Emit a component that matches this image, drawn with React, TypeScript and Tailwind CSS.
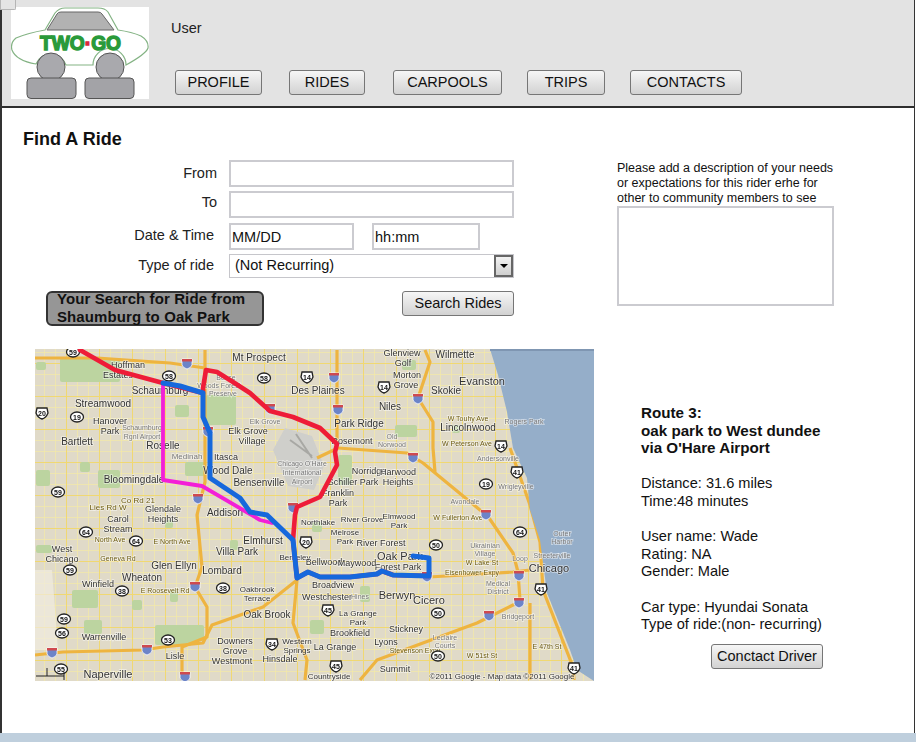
const FONT = "font-['Liberation_Sans',Arial,sans-serif]";

// map data is in page pixels, the svg viewBox starts at the map's page position
type Label = [number, number, string, number?, string?];

const LABELS: Label[] = [
  [128, 365, 'Hoffman', 9], [118, 375, 'Estates', 9], [160, 391, 'Schaumburg', 10], [259, 358, 'Mt Prospect', 10],
  [318, 391, 'Des Plaines', 10], [103, 404, 'Streamwood', 10], [110, 421, 'Hanover', 9], [110, 431, 'Park', 9],
  [142, 427, 'Schaumburg', 7, '#777'], [142, 436, 'Rgnl Airport', 7, '#777'], [163, 446, 'Roselle', 10], [77, 442, 'Bartlett', 10],
  [187, 456, 'Medinah', 8, '#777'], [226, 457, 'Itasca', 9], [228, 471, 'Wood Dale', 10], [259, 483, 'Bensenville', 10],
  [248, 431, 'Elk Grove', 9], [252, 441, 'Village', 9], [265, 421, 'Elk Grove', 7, '#777'], [134, 480, 'Bloomingdale', 10],
  [163, 509, 'Glendale', 9], [225, 513, 'Addison', 10], [302, 463, "Chicago O'Hare", 7, '#777'], [302, 472, 'International', 7, '#777'],
  [302, 481, 'Airport', 7, '#777'], [226, 377, 'Busse', 7, '#777'], [219, 385, 'Woods Forest', 7, '#777'], [223, 393, 'Preserve', 7, '#777'],
  [138, 500, 'Co Rd 21', 8, '#6b5a10'], [108, 507, 'Lies Rd W', 8, '#6b5a10'], [402, 353, 'Glenview', 9], [403, 363, 'Golf', 9],
  [407, 375, 'Morton', 9], [406, 385, 'Grove', 9], [455, 355, 'Wilmette', 10], [482, 382, 'Evanston', 11],
  [446, 391, 'Skokie', 10], [390, 407, 'Niles', 10], [359, 424, 'Park Ridge', 10], [352, 441, 'Rosemont', 9],
  [392, 436, 'Old', 7, '#777'], [392, 444, 'Norwood', 7, '#777'], [468, 428, 'Lincolnwood', 10], [468, 418, 'W Touhy Ave', 7, '#6b5a10'],
  [467, 443, 'W Peterson Ave', 7, '#6b5a10'], [524, 421, 'Rogers Park', 7, '#777'], [498, 458, 'Andersonville', 7, '#777'],
  [516, 486, 'Wrigleyville', 7, '#777'], [369, 471, 'Norridge', 9], [398, 472, 'Harwood', 9], [398, 482, 'Heights', 9],
  [353, 482, 'Schiller Park', 9], [338, 493, 'Franklin', 9], [338, 503, 'Park', 9], [465, 501, 'Avondale', 7, '#777'],
  [118, 519, 'Carol', 9], [118, 529, 'Stream', 9], [163, 519, 'Heights', 9], [62, 549, 'West', 9], [62, 559, 'Chicago', 9],
  [110, 539, 'North Ave', 7, '#6b5a10'], [172, 541, 'E North Ave', 7, '#6b5a10'], [118, 558, 'Geneva Rd', 7, '#6b5a10'],
  [263, 541, 'Elmhurst', 10], [237, 552, 'Villa Park', 10], [174, 566, 'Glen Ellyn', 10], [222, 571, 'Lombard', 10],
  [98, 584, 'Winfield', 9], [142, 578, 'Wheaton', 10], [165, 590, 'E Roosevelt Rd', 7, '#6b5a10'], [257, 589, 'Oakbrook', 8],
  [257, 598, 'Terrace', 8], [267, 615, 'Oak Brook', 10], [104, 637, 'Warrenville', 9], [235, 641, 'Downers', 9], [235, 651, 'Grove', 9],
  [232, 661, 'Westmont', 9], [175, 656, 'Lisle', 9], [108, 675, 'Naperville', 11], [280, 659, 'Hinsdale', 9],
  [297, 641, 'Western', 8], [297, 650, 'Springs', 8], [295, 557, 'Berkeley', 8], [318, 522, 'Northlake', 8],
  [362, 519, 'River Grove', 8], [399, 516, 'Elmwood', 8], [399, 525, 'Park', 8], [345, 532, 'Melrose', 8], [345, 541, 'Park', 8],
  [381, 543, 'River Forest', 9], [400, 557, 'Oak Park', 11], [398, 567, 'Forest Park', 9], [324, 562, 'Bellwood', 9], [357, 563, 'Maywood', 9],
  [333, 585, 'Broadview', 9], [327, 597, 'Westchester', 9], [360, 596, 'Hines', 7, '#777'], [397, 596, 'Berwyn', 11], [429, 601, 'Cicero', 11],
  [358, 613, 'La Grange', 8], [358, 622, 'Park', 8], [406, 629, 'Stickney', 9], [350, 633, 'Brookfield', 9], [386, 642, 'Lyons', 9],
  [335, 647, 'La Grange', 9], [395, 669, 'Summit', 9], [329, 676, 'Countryside', 8], [549, 569, 'Chicago', 11],
  [458, 517, 'W Fullerton Ave', 7, '#6b5a10'], [482, 562, 'W Lake St', 7, '#6b5a10'], [485, 545, 'Ukrainian', 7, '#777'], [485, 553, 'Village', 7, '#777'],
  [498, 583, 'Medical', 7, '#777'], [498, 591, 'District', 7, '#777'], [518, 616, 'Bridgeport', 7, '#777'], [520, 558, 'Loop', 7, '#777'],
  [552, 555, 'Streeterville', 7, '#777'], [562, 533, 'Outer', 7, '#777'], [562, 541, 'Harbor', 7, '#777'], [445, 637, 'Leclaire', 7, '#777'],
  [445, 645, 'Courts', 7, '#777'], [482, 655, 'W 51st St', 7, '#6b5a10'], [547, 646, 'E 47th St', 7, '#6b5a10'],
  [472, 572, 'Eisenhower Expy', 7, '#6b5a10'], [415, 650, 'Stevenson Expy', 7, '#6b5a10'], [502, 676, '©2011 Google - Map data ©2011 Google', 8, '#333'],
];

const CIRCLES: [number, number, string][] = [
  [73, 352, '59'], [169, 376, '58'], [264, 378, '58'], [77, 417, '19'], [58, 492, '59'], [486, 484, '19'], [86, 532, '64'], [136, 541, '64'],
  [70, 570, '59'], [122, 591, '38'], [223, 588, '38'], [64, 619, '59'], [62, 633, '56'], [168, 640, '53'], [61, 669, '55'], [436, 545, '50'],
  [520, 532, '64'], [438, 613, '50'], [438, 656, '50'],
];
const US: [number, number, string][] = [
  [307, 377, '14'], [42, 413, '20'], [384, 387, '14'], [501, 446, '14'], [517, 472, '41'], [272, 644, '34'], [306, 542, '20'],
  [328, 610, '45'], [336, 666, '45'], [541, 589, '41'], [574, 668, '41'],
];
const INTERSTATE: [number, number][] = [
  [187, 364], [208, 432], [198, 499], [270, 409], [293, 508], [334, 378], [338, 410], [418, 399], [413, 458], [195, 587],
  [52, 653], [147, 650], [185, 677], [519, 576], [519, 603], [489, 616], [486, 515], [427, 577],
];
const GREENS: [number, number, number, number][] = [
  [60, 358, 60, 24], [206, 395, 30, 30], [36, 470, 14, 16], [98, 470, 22, 18], [80, 462, 10, 10], [185, 462, 20, 14],
  [338, 455, 14, 30], [402, 360, 14, 10], [395, 425, 22, 12], [36, 545, 16, 8], [72, 590, 26, 18], [84, 620, 18, 14],
  [155, 625, 40, 20], [132, 600, 10, 10], [170, 590, 8, 12], [190, 625, 14, 16], [310, 620, 14, 14], [360, 586, 10, 16],
  [312, 522, 10, 10], [452, 425, 8, 8], [36, 362, 10, 8], [175, 405, 14, 12], [165, 520, 8, 8], [230, 540, 8, 10],
];
const ORANGE = [
  '35,358 97,358 170,363 205,368', '205,350 205,482 197,515 202,567 195,587 207,607 207,637 182,647 182,680',
  '35,655 63,652 143,650 163,647 203,643 212,625 263,607 297,580 293,623 307,660 305,680',
  '338,448 407,453 423,463 480,510 487,515 513,553 518,572 520,600', '425,350 430,362 418,398 433,422 433,448 435,472',
  '429,577 513,572 530,570', '360,680 377,660 477,623 513,605 520,602', '530,603 530,680',
  '510,448 530,505 540,542 543,590 573,667 574,680', '337,350 337,442', '338,448 317,458',
];

function RideMap() {
  return (
    <svg viewBox="35 349 559 332" className="block h-[332px] w-[559px] shrink-0" fontFamily="'Liberation Sans', Arial, sans-serif">
      <defs>
        <pattern id="blocks" width="11" height="11" patternUnits="userSpaceOnUse">
          <rect width="11" height="11" fill="#e0dac8" />
          <path d="M0 0H11M0 0V11" stroke="#f3e9a8" strokeWidth="1.5" />
        </pattern>
        <pattern id="arterials" width="33" height="33" patternUnits="userSpaceOnUse">
          <path d="M0 0H33M0 0V33" stroke="#f0d872" strokeWidth="2" />
        </pattern>
        <filter id="soft">
          <feGaussianBlur stdDeviation="0.6" />
        </filter>
      </defs>
      <g filter="url(#soft)">
        <rect x="35" y="349" width="559" height="332" fill="url(#blocks)" />
        <rect x="35" y="349" width="559" height="332" fill="url(#arterials)" />
        <path d="M35 570H52L58 650H35Z" fill="#f1ede0" opacity="0.7" />
        {GREENS.map(([x, y, w, h]) => (
          <rect key={`${x}-${y}`} x={x} y={y} width={w} height={h} rx="2" fill="#bcd4a0" />
        ))}
        <path d="M285 428l27 8 12 30-10 24-26-4-15-36Z" fill="#cfcfcb" />
        <path d="M290 440l22 16M296 434l16 24" stroke="#a8a8a4" strokeWidth="2" />
        {ORANGE.map((points) => (
          <polyline key={points} points={points} fill="none" stroke="#eeb440" strokeWidth="3.2" strokeLinejoin="round" />
        ))}
        <path d="M490 349L498 375 507 412 513 448 527 478 530 510 540 540 547 593 570 650 577 670 594 681V349Z" fill="#95aec9" />
        <rect x="490" y="349" width="104" height="2" fill="#7f96b2" />

        {LABELS.map(([x, y, text, size = 9, color = '#333']) => (
          <text
            key={`${x}-${y}-${text}`}
            x={x}
            y={y + 3}
            fontSize={size}
            fill={color}
            textAnchor="middle"
            stroke="#ffffff"
            strokeOpacity="0.55"
            strokeWidth="1.6"
            paintOrder="stroke"
          >
            {text}
          </text>
        ))}

        {CIRCLES.map(([x, y, n]) => (
          <g key={`${x}-${y}`}>
            <ellipse cx={x} cy={y} rx="6.5" ry="5" fill="#fff" stroke="#222" strokeWidth="1.3" />
            <text x={x} y={y + 2.5} fontSize="7" fontWeight="700" fill="#111" textAnchor="middle">{n}</text>
          </g>
        ))}
        {US.map(([x, y, n]) => (
          <g key={`${x}-${y}`}>
            <path d={`M${x - 5} ${y - 5}H${x + 5}L${x + 6} ${y}Q${x + 4} ${y + 5} ${x} ${y + 6}Q${x - 4} ${y + 5} ${x - 6} ${y}Z`} fill="#fff" stroke="#222" strokeWidth="1.3" />
            <text x={x} y={y + 2.5} fontSize="7" fontWeight="700" fill="#111" textAnchor="middle">{n}</text>
          </g>
        ))}
        {INTERSTATE.map(([x, y]) => (
          <g key={`${x}-${y}`}>
            <path d={`M${x - 5} ${y - 5}H${x + 5}L${x + 5} ${y + 1}Q${x + 4} ${y + 4} ${x} ${y + 5}Q${x - 4} ${y + 4} ${x - 5} ${y + 1}Z`} fill="#6c84c8" stroke="#fff" strokeWidth="0.8" />
            <rect x={x - 5} y={y - 5} width="10" height="2.5" fill="#cf4a50" />
          </g>
        ))}
      </g>

      <g fill="none" strokeLinejoin="round" strokeLinecap="round">
        <polyline
          points="80,350 115,370 163,383 203,393 203,388 206,370 217,372 233,382 250,393 270,411 293,417 320,428 337,444 335,452 337,465 320,497 297,507 295,515 293,540 297,578 308,572 320,577 350,577 377,574 382,571 393,575 429,576"
          stroke="#ee1c38"
          strokeWidth="4.6"
        />
        <polyline points="163,383 163,480 202,486 243,510 260,520 272,523" stroke="#f31fd7" strokeWidth="3.8" />
        <polyline
          points="163,383 180,386 203,393 203,417 210,433 210,478 240,498 250,512 267,515 293,540 297,578 308,572 320,577 350,577 377,574 382,571 393,575 429,576 429,558 413,556"
          stroke="#1668dc"
          strokeWidth="5"
        />
      </g>
      <path d="M36 676H64M47 668V676M64 672V680" stroke="#222" strokeWidth="1" />
    </svg>
  );
}

function Logo() {
  return (
    <svg viewBox="11 7 138 92" className="block h-[92px] w-[138px] shrink-0 bg-white" fontFamily="'Liberation Sans', Arial, sans-serif">
      <path
        d="M36 64C24 62 15 58 12 50Q10 43 16 38Q28 33 45 30L55 13Q59 8 65 8H98Q105 8 108 12L118 30Q132 32 141 36Q149 41 148 48Q146 54 126 65A16 16 0 0 0 93 65H66A16 16 0 0 0 36 64Z"
        fill="none"
        stroke="#84b384"
        strokeWidth="1.2"
      />
      <path d="M47 30L57 14Q58 12 61 12H98Q101 12 102 14L114 30Z" fill="#b2b2b2" stroke="#666" strokeWidth="1" />
      <text
        x="40"
        y="50"
        fontSize="20"
        fontWeight="700"
        fill="#2a9a3a"
        stroke="#2a9a3a"
        strokeWidth="1.4"
        textLength="81"
        lengthAdjust="spacingAndGlyphs"
      >
        TWO<tspan fill="#d8283c" stroke="#d8283c">·</tspan>GO
      </text>
      <circle cx="51" cy="67" r="14" fill="#a9a9ad" stroke="#555" strokeWidth="1" />
      <circle cx="110" cy="67" r="14" fill="#a9a9ad" stroke="#555" strokeWidth="1" />
      <rect x="27" y="78" width="49" height="20.5" rx="4" fill="#a3a3a7" stroke="#555" strokeWidth="1" />
      <rect x="85" y="78" width="49" height="20.5" rx="4" fill="#a3a3a7" stroke="#555" strokeWidth="1" />
    </svg>
  );
}

function NavButton({ label, className }: { label: string; className: string }) {
  return (
    <button
      type="button"
      className={`h-[25px] rounded-[3px] border border-[#767676] bg-gradient-to-b from-[#f6f6f6] to-[#d2d2d2] text-[14.5px] text-[#111] ${className}`}
    >
      {label}
    </button>
  );
}

function FieldRow({ label, labelClass, className, children }: { label: string; labelClass: string; className: string; children: React.ReactNode }) {
  return (
    <div className={`flex items-center ${className}`}>
      <span className={`w-[194px] text-right text-[14.5px] text-[#222] ${labelClass}`}>{label}</span>
      <div className="ml-3 flex">{children}</div>
    </div>
  );
}

const inputClass = 'border-2 border-[#cbcbd0] bg-white px-[1px] text-[14.5px] text-[#111] outline-none';

export default function App() {
  return (
    <div className={`relative flex h-[742px] w-[916px] flex-col overflow-hidden bg-white ${FONT}`}>
      {/* Stray widget in the corner */}
      <div className="absolute left-0 top-0 z-10 h-[10px] w-[16px] rounded-br-[2px] border border-t-0 border-[#b5b5b5] bg-[#e4e4e4]" />

      <div className="mr-[1px] flex min-h-0 flex-1 flex-col border-l-2 border-r-[1px] border-[#333]">
        <header className="flex h-[108px] shrink-0 border-b-2 border-[#2e2e2e] bg-[#e3e3e3] pl-[9px] pt-[7px]">
          <Logo />
          <div className="flex flex-col pl-[22px]">
            <span className="pt-[12px] text-[14.5px] leading-[18px] text-[#222]">User</span>
            <nav className="ml-1 mt-[33px] flex">
              <NavButton label="PROFILE" className="w-[87px]" />
              <NavButton label="RIDES" className="ml-[27px] w-[76px]" />
              <NavButton label="CARPOOLS" className="ml-[28px] w-[109px]" />
              <NavButton label="TRIPS" className="ml-[25px] w-[78px]" />
              <NavButton label="CONTACTS" className="ml-[25px] w-[112px]" />
            </nav>
          </div>
        </header>

        <main className="flex min-h-0 flex-1 flex-col">
          <section className="flex h-[241px] shrink-0">
            <div className="w-[615px] shrink-0 pl-[21px]">
              <h1 className="pt-[21px] text-[18px] font-bold leading-[21px] text-[#111]">Find A Ride</h1>
              <FieldRow label="From" labelClass="" className="mt-[10px]">
                <input aria-label="From" className={`${inputClass} h-[27px] w-[285px]`} />
              </FieldRow>
              <FieldRow label="To" labelClass="pb-[4px]" className="mt-[4px]">
                <input aria-label="To" className={`${inputClass} h-[27px] w-[285px]`} />
              </FieldRow>
              <FieldRow label="Date & Time" labelClass="pb-[2px] pr-[3px]" className="mt-[5px]">
                <input aria-label="Date" defaultValue="MM/DD" className={`${inputClass} h-[27px] w-[125px]`} />
                <input aria-label="Time" defaultValue="hh:mm" className={`${inputClass} ml-[18px] h-[27px] w-[108px]`} />
              </FieldRow>
              <FieldRow label="Type of ride" labelClass="pr-[3px]" className="mt-[4px]">
                <div className="flex h-[24px] w-[285px] items-center justify-between border border-[#c6c6cb] pl-[5px] text-[14.5px] text-[#111]">
                  <span>(Not Recurring)</span>
                  <span className="flex h-[22px] w-[19px] items-center justify-center border-2 border-[#666] bg-gradient-to-b from-[#f2f2f2] to-[#cfcfcf]">
                    <span className="h-0 w-0 border-x-[4px] border-t-[4px] border-x-transparent border-t-black" />
                  </span>
                </div>
              </FieldRow>
              <div className="ml-[23px] mt-[13px] flex items-start">
                <div className="h-[35px] w-[218px] rounded-[6px] border-2 border-[#333] bg-[#969696] pl-[9px] text-[15px] font-bold leading-[18px] text-[#111]">
                  <div className="-mt-[3px] tracking-[0.1px]">
                    Your Search for Ride from
                    <br />
                    Shaumburg to Oak Park
                  </div>
                </div>
                <button
                  type="button"
                  className="ml-[138px] h-[25px] w-[112px] rounded-[3px] border border-[#767676] bg-gradient-to-b from-[#f6f6f6] to-[#d2d2d2] text-[14.5px] text-[#111]"
                >
                  Search Rides
                </button>
              </div>
            </div>
            <aside className="w-[217px] pt-[53px]">
              <p className="whitespace-nowrap text-[12.5px] leading-[15px] text-[#111]">
                Please add a description of your needs
                <br />
                or expectations for this rider erhe for
                <br />
                other to community members to see
              </p>
              <textarea aria-label="Description" className="block h-[100px] w-[217px] resize-none border-2 border-[#cbcbd0] outline-none" />
            </aside>
          </section>

          <section className="flex">
            <div className="ml-[33px]">
              <RideMap />
            </div>
            <aside className="ml-[47px] w-[190px] pt-[55px] text-[14.6px] leading-[17.7px] text-[#111]">
              <p className="whitespace-nowrap text-[15.2px] font-bold">
                Route 3:
                <br />
                oak park to West dundee
                <br />
                via O'Hare Airport
              </p>
              <p className="mt-[17.7px]">
                Distance: 31.6 miles
                <br />
                Time:48 minutes
              </p>
              <p className="mt-[17.7px]">
                User name: Wade
                <br />
                Rating: NA
                <br />
                Gender: Male
              </p>
              <p className="mt-[17.7px] whitespace-nowrap">
                Car type: Hyundai Sonata
                <br />
                Type of ride:(non- recurring)
              </p>
              <button
                type="button"
                className="ml-[70px] mt-[10px] h-[25px] w-[112px] rounded-[3px] border border-[#767676] bg-gradient-to-b from-[#f6f6f6] to-[#d2d2d2] text-[14.5px] text-[#111]"
              >
                Conctact Driver
              </button>
            </aside>
          </section>
        </main>
      </div>
      <footer className="h-[9px] shrink-0 bg-[#bfcfdd]" />
    </div>
  );
}
